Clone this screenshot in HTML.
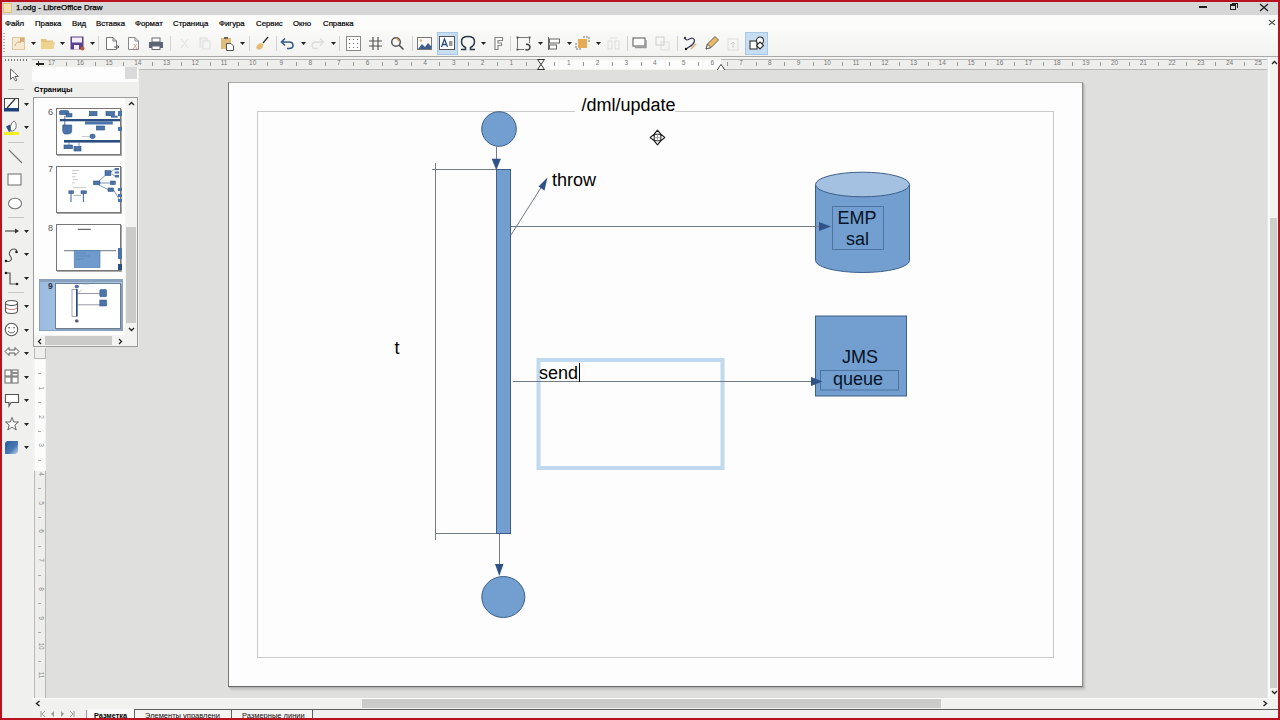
<!DOCTYPE html><html><head><meta charset="utf-8"><style>
*{margin:0;padding:0;box-sizing:border-box}
html,body{width:1280px;height:720px;overflow:hidden;background:#f0f0ef;font-family:"Liberation Sans",sans-serif;color:#000}
.a{position:absolute}
.t{position:absolute;white-space:nowrap;line-height:1}
</style></head><body>
<div class="a" style="left:0;top:0;width:1280px;height:15px;background:#d7d7d7"></div>
<div class="a" style="left:3px;top:3px;width:9px;height:10px;background:#f6e2b0;border:1px solid #e0c080"></div>
<div class="t" style="left:16px;top:4px;font-size:8px;color:#000;-webkit-text-stroke:0.25px #000">1.odg - LibreOffice Draw</div>
<div class="a" style="left:1199px;top:6px;width:8px;height:2px;background:#222"></div>
<div class="a" style="left:1230px;top:4px;width:6px;height:6px;border:1.5px solid #222;border-top-width:2px"></div>
<div class="a" style="left:1232px;top:3px;width:6px;height:5px;border-top:1.5px solid #222;border-right:1.5px solid #222"></div>
<svg class="a" style="left:1259px;top:3px" width="10" height="9"><path d="M1 1L9 8M9 1L1 8" stroke="#222" stroke-width="1.4"/></svg>
<div class="a" style="left:0;top:15px;width:1280px;height:15px;background:#fcfcfb"></div>
<div class="t" style="left:5px;top:20px;font-size:7.8px;color:#000;-webkit-text-stroke:0.2px #000">Файл</div>
<div class="t" style="left:35px;top:20px;font-size:7.8px;color:#000;-webkit-text-stroke:0.2px #000">Правка</div>
<div class="t" style="left:72px;top:20px;font-size:7.8px;color:#000;-webkit-text-stroke:0.2px #000">Вид</div>
<div class="t" style="left:96px;top:20px;font-size:7.8px;color:#000;-webkit-text-stroke:0.2px #000">Вставка</div>
<div class="t" style="left:135px;top:20px;font-size:7.8px;color:#000;-webkit-text-stroke:0.2px #000">Формат</div>
<div class="t" style="left:173px;top:20px;font-size:7.8px;color:#000;-webkit-text-stroke:0.2px #000">Страница</div>
<div class="t" style="left:219px;top:20px;font-size:7.8px;color:#000;-webkit-text-stroke:0.2px #000">Фигура</div>
<div class="t" style="left:256px;top:20px;font-size:7.8px;color:#000;-webkit-text-stroke:0.2px #000">Сервис</div>
<div class="t" style="left:293px;top:20px;font-size:7.8px;color:#000;-webkit-text-stroke:0.2px #000">Окно</div>
<div class="t" style="left:323px;top:20px;font-size:7.8px;color:#000;-webkit-text-stroke:0.2px #000">Справка</div>
<svg class="a" style="left:1268px;top:19px" width="8" height="7"><path d="M1 1L7 6M7 1L1 6" stroke="#555" stroke-width="1.2"/></svg>
<div class="a" style="left:0;top:30px;width:1280px;height:26px;background:linear-gradient(#fafaf9,#f2f2f1)"></div>
<div class="a" style="left:0;top:56px;width:1280px;height:1px;background:#a9a9a9"></div>
<div class="a" style="left:3px;top:33px;width:2px;height:20px;background:repeating-linear-gradient(#e0a0a0 0 1px,transparent 1px 3px)"></div>
<svg class="a" style="left:11px;top:36px" width="15" height="15"><rect x="1.5" y="1.5" width="12" height="12" fill="#f7ead2" stroke="#e0c69a"/><path d="M4 10C5 6 8 5 10 7" stroke="#caa36c" fill="none"/><rect x="9" y="2" width="4" height="4" fill="#d9b07a"/></svg>
<svg class="a" style="left:31px;top:42px" width="5" height="3"><path d="M0 0H5L2.5 3Z" fill="#222"/></svg>
<svg class="a" style="left:40px;top:37px" width="16" height="13"><path d="M1 2H6L7 3.5H13V12H1Z" fill="#e4c47e"/><path d="M1 5H15L13.5 12H1Z" fill="#eed38f"/></svg>
<svg class="a" style="left:60px;top:42px" width="5" height="3"><path d="M0 0H5L2.5 3Z" fill="#222"/></svg>
<svg class="a" style="left:70px;top:36px" width="15" height="15"><rect x="0.5" y="0.5" width="13" height="13" fill="#5b3f8c"/><rect x="2" y="1.5" width="10" height="5" fill="#f3eef8"/><rect x="4" y="9" width="5" height="4.5" fill="#f3eef8"/><circle cx="12.5" cy="12.5" r="2" fill="#c05a2a"/></svg>
<svg class="a" style="left:90px;top:42px" width="5" height="3"><path d="M0 0H5L2.5 3Z" fill="#222"/></svg>
<div class="a" style="left:98px;top:36px;width:1px;height:15px;background:#d2d2d2"></div>
<svg class="a" style="left:105px;top:36px" width="15" height="15"><path d="M1.5 1.5H8L11.5 5V13.5H1.5Z" fill="#fff" stroke="#777"/><path d="M8 1.5V5H11.5" fill="none" stroke="#777"/><path d="M9 11H14M12.5 9.5L14 11L12.5 12.5" stroke="#555" fill="none"/></svg>
<svg class="a" style="left:127px;top:36px" width="15" height="15"><path d="M1.5 1.5H8L11.5 5V13.5H1.5Z" fill="#fff" stroke="#888"/><path d="M8 1.5V5H11.5" fill="none" stroke="#888"/><path d="M7 8L10 13M10 8L6 13" stroke="#d99" fill="none"/></svg>
<svg class="a" style="left:148px;top:37px" width="16" height="13"><rect x="4" y="1" width="8" height="4" fill="#fff" stroke="#667"/><rect x="1" y="5" width="14" height="6" fill="#5c6673"/><rect x="4" y="9" width="8" height="3.5" fill="#fff" stroke="#667"/></svg>
<div class="a" style="left:170px;top:36px;width:1px;height:15px;background:#d2d2d2"></div>
<svg class="a" style="left:178px;top:37px" width="14" height="13"><path d="M3 2L10 11M10 2L3 11" stroke="#ddd" fill="none"/></svg>
<svg class="a" style="left:198px;top:36px" width="14" height="14"><rect x="2" y="2" width="7" height="9" fill="#eee" stroke="#ddd"/><rect x="5" y="5" width="7" height="8" fill="#f4f4f4" stroke="#ddd"/></svg>
<svg class="a" style="left:220px;top:36px" width="15" height="15"><rect x="1" y="2" width="10" height="11" fill="#e0bd7c"/><rect x="4" y="1" width="4" height="2" fill="#666"/><path d="M6.5 7.5H11L13.5 10V14.5H6.5Z" fill="#fff" stroke="#555"/></svg>
<svg class="a" style="left:240px;top:42px" width="5" height="3"><path d="M0 0H5L2.5 3Z" fill="#222"/></svg>
<div class="a" style="left:249px;top:36px;width:1px;height:15px;background:#d2d2d2"></div>
<svg class="a" style="left:255px;top:36px" width="14" height="15"><path d="M13 1L8 7" stroke="#333" stroke-width="1.3"/><path d="M1 12C2 8 5 6 8 8C9 10 7 13 4 14Z" fill="#e5bd72"/></svg>
<div class="a" style="left:276px;top:36px;width:1px;height:15px;background:#d2d2d2"></div>
<svg class="a" style="left:280px;top:37px" width="15" height="13"><path d="M2 5H9C12 5 13 7 13 8.5C13 10.5 11 11.5 9 11.5H7" fill="none" stroke="#365a86" stroke-width="1.6"/><path d="M5 1.5L1.5 5L5 8.5" fill="none" stroke="#365a86" stroke-width="1.6"/></svg>
<svg class="a" style="left:301px;top:42px" width="5" height="3"><path d="M0 0H5L2.5 3Z" fill="#222"/></svg>
<svg class="a" style="left:310px;top:37px" width="15" height="13"><path d="M13 5H6C3 5 2 7 2 8.5C2 10.5 4 11.5 6 11.5H8" fill="none" stroke="#dcdcdc" stroke-width="1.4"/><path d="M10 1.5L13.5 5L10 8.5" fill="none" stroke="#dcdcdc" stroke-width="1.4"/></svg>
<svg class="a" style="left:331px;top:42px" width="5" height="3"><path d="M0 0H5L2.5 3Z" fill="#222"/></svg>
<div class="a" style="left:339px;top:36px;width:1px;height:15px;background:#d2d2d2"></div>
<svg class="a" style="left:346px;top:36px" width="15" height="15"><rect x="0.5" y="0.5" width="14" height="14" fill="#fff" stroke="#888"/><g fill="#666"><rect x="3" y="3" width="1" height="1"/><rect x="3" y="7" width="1" height="1"/><rect x="3" y="11" width="1" height="1"/><rect x="7" y="3" width="1" height="1"/><rect x="7" y="7" width="1" height="1"/><rect x="7" y="11" width="1" height="1"/><rect x="11" y="3" width="1" height="1"/><rect x="11" y="7" width="1" height="1"/><rect x="11" y="11" width="1" height="1"/></g></svg>
<svg class="a" style="left:368px;top:36px" width="15" height="15"><path d="M5 1V14M10 1V14M1 5H14M1 10H14" stroke="#555" stroke-width="1.2"/></svg>
<svg class="a" style="left:390px;top:36px" width="15" height="15"><circle cx="6" cy="6" r="4.3" fill="none" stroke="#555" stroke-width="1.5"/><path d="M9 9L13.5 13.5" stroke="#555" stroke-width="1.7"/><path d="M6 2L9 5" stroke="#d9a650" stroke-width="1.2"/></svg>
<div class="a" style="left:412px;top:36px;width:1px;height:15px;background:#d2d2d2"></div>
<svg class="a" style="left:417px;top:36px" width="15" height="15"><rect x="0.5" y="1.5" width="14" height="12" fill="#fff" stroke="#777"/><path d="M1 13L5 8L8 11L11 7L14 10V13Z" fill="#3e5f8e"/><circle cx="4" cy="4.5" r="1.2" fill="#d8b070"/></svg>
<div class="a" style="left:437px;top:32px;width:21px;height:23px;background:#c6ddf2;border:1px solid #a9c8e6"></div>
<svg class="a" style="left:439px;top:36px" width="16" height="15"><rect x="0.5" y="0.5" width="15" height="13" fill="#fff" stroke="#555"/><path d="M2.5 11L5.5 3L8.5 11M3.5 8.5H7.5" fill="none" stroke="#2c4f7c" stroke-width="1.3"/><rect x="10" y="5" width="3.5" height="5" fill="#999"/></svg>
<svg class="a" style="left:460px;top:35px" width="16" height="16"><path d="M1 14.5H5.5V12.5C2.8 11.2 1.5 9 1.5 6.5C1.5 3.3 4 1.5 8 1.5C12 1.5 14.5 3.3 14.5 6.5C14.5 9 13.2 11.2 10.5 12.5V14.5H15" fill="none" stroke="#2d3a48" stroke-width="1.5"/></svg>
<svg class="a" style="left:481px;top:42px" width="5" height="3"><path d="M0 0H5L2.5 3Z" fill="#222"/></svg>
<svg class="a" style="left:493px;top:36px" width="11" height="15"><path d="M2 1.5H9.5V4.5H5V7H8.5V9.5H5V13.5H2Z" fill="#fff" stroke="#888" stroke-width="1.2"/></svg>
<div class="a" style="left:510px;top:36px;width:1px;height:15px;background:#d2d2d2"></div>
<svg class="a" style="left:516px;top:36px" width="16" height="15"><path d="M1.5 2V12M2 1.5H12M13.5 2V7M2 13.5H8" fill="none" stroke="#777" stroke-width="1"/><rect x="0.5" y="0.5" width="2" height="2" fill="#555"/><rect x="12.5" y="0.5" width="2" height="2" fill="#555"/><rect x="0.5" y="12.5" width="2" height="2" fill="#555"/><path d="M10 8.5C12 8 14 9 14 11C14 13.5 11.5 14.5 9.5 13.5" fill="none" stroke="#3a3a3a" stroke-width="1.5"/></svg>
<svg class="a" style="left:538px;top:42px" width="5" height="3"><path d="M0 0H5L2.5 3Z" fill="#222"/></svg>
<svg class="a" style="left:547px;top:36px" width="15" height="15"><path d="M1.5 1V14" stroke="#666"/><rect x="2.5" y="3" width="10" height="4" fill="#fff" stroke="#666"/><rect x="2.5" y="9" width="7" height="4" fill="#fff" stroke="#666"/></svg>
<svg class="a" style="left:567px;top:42px" width="5" height="3"><path d="M0 0H5L2.5 3Z" fill="#222"/></svg>
<svg class="a" style="left:575px;top:36px" width="15" height="15"><path d="M1 7V13H7" fill="none" stroke="#777" stroke-dasharray="2 1"/><path d="M8 1H14V7" fill="none" stroke="#777" stroke-dasharray="2 1"/><rect x="3" y="3" width="9" height="9" fill="#e7ab56"/></svg>
<svg class="a" style="left:596px;top:42px" width="5" height="3"><path d="M0 0H5L2.5 3Z" fill="#222"/></svg>
<svg class="a" style="left:606px;top:37px" width="15" height="13"><rect x="2" y="4" width="4" height="8" fill="none" stroke="#ddd"/><rect x="9" y="4" width="4" height="8" fill="none" stroke="#ddd"/><path d="M4 1H11" stroke="#ddd"/></svg>
<div class="a" style="left:627px;top:36px;width:1px;height:15px;background:#d2d2d2"></div>
<svg class="a" style="left:632px;top:37px" width="15" height="12"><rect x="1" y="1" width="12" height="8" fill="#fff" stroke="#555"/><path d="M3 10.5H14V3" fill="none" stroke="#999" stroke-width="1.5"/></svg>
<svg class="a" style="left:655px;top:36px" width="15" height="15"><rect x="1" y="1" width="8" height="8" fill="none" stroke="#ccc"/><rect x="6" y="6" width="8" height="8" fill="none" stroke="#ddd"/></svg>
<div class="a" style="left:677px;top:36px;width:1px;height:15px;background:#d2d2d2"></div>
<svg class="a" style="left:683px;top:36px" width="15" height="15"><path d="M2 2C4 6 5 3 9 2C13 3 12 8 6 11L3 13" fill="none" stroke="#335" stroke-width="1.2"/><circle cx="2" cy="2" r="1.2" fill="#333"/><circle cx="3" cy="13" r="1.2" fill="#111"/><path d="M8 13L13 8" stroke="#e0b070" stroke-width="1.5"/></svg>
<svg class="a" style="left:704px;top:35px" width="16" height="16"><path d="M2 14L3.5 9L11 1.5L14.5 5L7 12.5Z" fill="#e9b967" stroke="#555" stroke-width=".9"/><path d="M2 14L3.5 9L7 12.5Z" fill="#f3ebcf" stroke="#555" stroke-width=".9"/></svg>
<svg class="a" style="left:727px;top:36px" width="15" height="15"><rect x="1" y="3" width="10" height="11" fill="none" stroke="#ddd"/><path d="M6 12V6M4 8L6 6L8 8" stroke="#ccc" fill="none"/></svg>
<div class="a" style="left:745px;top:32px;width:23px;height:23px;background:#c6ddf2;border:1px solid #a9c8e6"></div>
<svg class="a" style="left:749px;top:36px" width="16" height="15"><rect x="1" y="5" width="7" height="8" fill="#fff" stroke="#333" stroke-width="1.1"/><circle cx="11" cy="4.5" r="3.5" fill="#fff" stroke="#333" stroke-width="1.1"/><path d="M11 6L14.5 9.5L11 13L7.5 9.5Z" fill="#fff" stroke="#333" stroke-width="1.1"/></svg>
<div class="a" style="left:30px;top:57px;width:1240px;height:13px;background:#f3f3f2"></div>
<div class="a" style="left:30px;top:59px;width:510px;height:11px;border-top:1px solid #b8b8b8;border-bottom:1px solid #b8b8b8;background:#eeeeed"></div>
<div class="a" style="left:721px;top:59px;width:548px;height:11px;border-top:1px solid #b8b8b8;border-bottom:1px solid #b8b8b8;background:#eeeeed"></div>
<div class="a" style="left:540px;top:60px;width:181px;height:9px;background:#fcfcfc"></div>
<div class="t" style="left:562.7px;top:60px;width:12px;text-align:center;font-size:6.5px;color:#777">1</div>
<div class="a" style="left:554.4px;top:62px;width:1px;height:3.5px;background:#999"></div>
<div class="t" style="left:591.5px;top:60px;width:12px;text-align:center;font-size:6.5px;color:#777">2</div>
<div class="a" style="left:583.1px;top:62px;width:1px;height:3.5px;background:#999"></div>
<div class="t" style="left:620.2px;top:60px;width:12px;text-align:center;font-size:6.5px;color:#777">3</div>
<div class="a" style="left:611.8px;top:62px;width:1px;height:3.5px;background:#999"></div>
<div class="t" style="left:648.9px;top:60px;width:12px;text-align:center;font-size:6.5px;color:#777">4</div>
<div class="a" style="left:640.6px;top:62px;width:1px;height:3.5px;background:#999"></div>
<div class="t" style="left:677.6px;top:60px;width:12px;text-align:center;font-size:6.5px;color:#777">5</div>
<div class="a" style="left:669.3px;top:62px;width:1px;height:3.5px;background:#999"></div>
<div class="t" style="left:706.4px;top:60px;width:12px;text-align:center;font-size:6.5px;color:#777">6</div>
<div class="a" style="left:698.0px;top:62px;width:1px;height:3.5px;background:#999"></div>
<div class="t" style="left:735.1px;top:60px;width:12px;text-align:center;font-size:6.5px;color:#777">7</div>
<div class="a" style="left:726.7px;top:62px;width:1px;height:3.5px;background:#999"></div>
<div class="t" style="left:763.8px;top:60px;width:12px;text-align:center;font-size:6.5px;color:#777">8</div>
<div class="a" style="left:755.5px;top:62px;width:1px;height:3.5px;background:#999"></div>
<div class="t" style="left:792.6px;top:60px;width:12px;text-align:center;font-size:6.5px;color:#777">9</div>
<div class="a" style="left:784.2px;top:62px;width:1px;height:3.5px;background:#999"></div>
<div class="t" style="left:821.3px;top:60px;width:12px;text-align:center;font-size:6.5px;color:#777">10</div>
<div class="a" style="left:812.9px;top:62px;width:1px;height:3.5px;background:#999"></div>
<div class="t" style="left:850.0px;top:60px;width:12px;text-align:center;font-size:6.5px;color:#777">11</div>
<div class="a" style="left:841.7px;top:62px;width:1px;height:3.5px;background:#999"></div>
<div class="t" style="left:878.8px;top:60px;width:12px;text-align:center;font-size:6.5px;color:#777">12</div>
<div class="a" style="left:870.4px;top:62px;width:1px;height:3.5px;background:#999"></div>
<div class="t" style="left:907.5px;top:60px;width:12px;text-align:center;font-size:6.5px;color:#777">13</div>
<div class="a" style="left:899.1px;top:62px;width:1px;height:3.5px;background:#999"></div>
<div class="t" style="left:936.2px;top:60px;width:12px;text-align:center;font-size:6.5px;color:#777">14</div>
<div class="a" style="left:927.9px;top:62px;width:1px;height:3.5px;background:#999"></div>
<div class="t" style="left:965.0px;top:60px;width:12px;text-align:center;font-size:6.5px;color:#777">15</div>
<div class="a" style="left:956.6px;top:62px;width:1px;height:3.5px;background:#999"></div>
<div class="t" style="left:993.7px;top:60px;width:12px;text-align:center;font-size:6.5px;color:#777">16</div>
<div class="a" style="left:985.3px;top:62px;width:1px;height:3.5px;background:#999"></div>
<div class="t" style="left:1022.4px;top:60px;width:12px;text-align:center;font-size:6.5px;color:#777">17</div>
<div class="a" style="left:1014.0px;top:62px;width:1px;height:3.5px;background:#999"></div>
<div class="t" style="left:1051.1px;top:60px;width:12px;text-align:center;font-size:6.5px;color:#777">18</div>
<div class="a" style="left:1042.8px;top:62px;width:1px;height:3.5px;background:#999"></div>
<div class="t" style="left:1079.9px;top:60px;width:12px;text-align:center;font-size:6.5px;color:#777">19</div>
<div class="a" style="left:1071.5px;top:62px;width:1px;height:3.5px;background:#999"></div>
<div class="t" style="left:1108.6px;top:60px;width:12px;text-align:center;font-size:6.5px;color:#777">20</div>
<div class="a" style="left:1100.2px;top:62px;width:1px;height:3.5px;background:#999"></div>
<div class="t" style="left:1137.3px;top:60px;width:12px;text-align:center;font-size:6.5px;color:#777">21</div>
<div class="a" style="left:1129.0px;top:62px;width:1px;height:3.5px;background:#999"></div>
<div class="t" style="left:1166.1px;top:60px;width:12px;text-align:center;font-size:6.5px;color:#777">22</div>
<div class="a" style="left:1157.7px;top:62px;width:1px;height:3.5px;background:#999"></div>
<div class="t" style="left:1194.8px;top:60px;width:12px;text-align:center;font-size:6.5px;color:#777">23</div>
<div class="a" style="left:1186.4px;top:62px;width:1px;height:3.5px;background:#999"></div>
<div class="t" style="left:1223.5px;top:60px;width:12px;text-align:center;font-size:6.5px;color:#777">24</div>
<div class="a" style="left:1215.2px;top:62px;width:1px;height:3.5px;background:#999"></div>
<div class="t" style="left:1252.2px;top:60px;width:12px;text-align:center;font-size:6.5px;color:#777">25</div>
<div class="a" style="left:1243.9px;top:62px;width:1px;height:3.5px;background:#999"></div>
<div class="t" style="left:505.3px;top:60px;width:12px;text-align:center;font-size:6.5px;color:#777">1</div>
<div class="a" style="left:525.6px;top:62px;width:1px;height:3.5px;background:#999"></div>
<div class="t" style="left:476.5px;top:60px;width:12px;text-align:center;font-size:6.5px;color:#777">2</div>
<div class="a" style="left:496.9px;top:62px;width:1px;height:3.5px;background:#999"></div>
<div class="t" style="left:447.8px;top:60px;width:12px;text-align:center;font-size:6.5px;color:#777">3</div>
<div class="a" style="left:468.2px;top:62px;width:1px;height:3.5px;background:#999"></div>
<div class="t" style="left:419.1px;top:60px;width:12px;text-align:center;font-size:6.5px;color:#777">4</div>
<div class="a" style="left:439.4px;top:62px;width:1px;height:3.5px;background:#999"></div>
<div class="t" style="left:390.4px;top:60px;width:12px;text-align:center;font-size:6.5px;color:#777">5</div>
<div class="a" style="left:410.7px;top:62px;width:1px;height:3.5px;background:#999"></div>
<div class="t" style="left:361.6px;top:60px;width:12px;text-align:center;font-size:6.5px;color:#777">6</div>
<div class="a" style="left:382.0px;top:62px;width:1px;height:3.5px;background:#999"></div>
<div class="t" style="left:332.9px;top:60px;width:12px;text-align:center;font-size:6.5px;color:#777">7</div>
<div class="a" style="left:353.3px;top:62px;width:1px;height:3.5px;background:#999"></div>
<div class="t" style="left:304.2px;top:60px;width:12px;text-align:center;font-size:6.5px;color:#777">8</div>
<div class="a" style="left:324.5px;top:62px;width:1px;height:3.5px;background:#999"></div>
<div class="t" style="left:275.4px;top:60px;width:12px;text-align:center;font-size:6.5px;color:#777">9</div>
<div class="a" style="left:295.8px;top:62px;width:1px;height:3.5px;background:#999"></div>
<div class="t" style="left:246.7px;top:60px;width:12px;text-align:center;font-size:6.5px;color:#777">10</div>
<div class="a" style="left:267.1px;top:62px;width:1px;height:3.5px;background:#999"></div>
<div class="t" style="left:218.0px;top:60px;width:12px;text-align:center;font-size:6.5px;color:#777">11</div>
<div class="a" style="left:238.3px;top:62px;width:1px;height:3.5px;background:#999"></div>
<div class="t" style="left:189.2px;top:60px;width:12px;text-align:center;font-size:6.5px;color:#777">12</div>
<div class="a" style="left:209.6px;top:62px;width:1px;height:3.5px;background:#999"></div>
<div class="t" style="left:160.5px;top:60px;width:12px;text-align:center;font-size:6.5px;color:#777">13</div>
<div class="a" style="left:180.9px;top:62px;width:1px;height:3.5px;background:#999"></div>
<div class="t" style="left:131.8px;top:60px;width:12px;text-align:center;font-size:6.5px;color:#777">14</div>
<div class="a" style="left:152.1px;top:62px;width:1px;height:3.5px;background:#999"></div>
<div class="t" style="left:103.1px;top:60px;width:12px;text-align:center;font-size:6.5px;color:#777">15</div>
<div class="a" style="left:123.4px;top:62px;width:1px;height:3.5px;background:#999"></div>
<div class="t" style="left:74.3px;top:60px;width:12px;text-align:center;font-size:6.5px;color:#777">16</div>
<div class="a" style="left:94.7px;top:62px;width:1px;height:3.5px;background:#999"></div>
<div class="t" style="left:45.6px;top:60px;width:12px;text-align:center;font-size:6.5px;color:#777">17</div>
<div class="a" style="left:66.0px;top:62px;width:1px;height:3.5px;background:#999"></div>
<div class="a" style="left:36px;top:63px;width:8px;height:1.5px;background:#222"></div><div class="a" style="left:37.5px;top:61px;width:1.5px;height:5px;background:#222"></div>
<svg class="a" style="left:536px;top:58px" width="10" height="13"><path d="M1.5 1.5H8.5L5 6.5L8.5 11.5H1.5L5 6.5Z" fill="#fff" stroke="#333" stroke-width="1"/></svg>
<svg class="a" style="left:716px;top:63px" width="10" height="8"><path d="M1 7.5H9L6.5 3.5L5 1.5L3.5 3.5Z" fill="#fff" stroke="#333" stroke-width="1"/></svg>
<div class="a" style="left:46px;top:70px;width:1221px;height:628px;background:#dfdfde"></div>
<div class="a" style="left:229px;top:84px;width:856px;height:607px;background:linear-gradient(#dfdfde,#dfdfde) ;"></div>
<div class="a" style="left:228px;top:82px;width:855px;height:605px;background:#fcfdfc;border-left:1px solid #777;border-top:1px solid #aaa;border-right:1px solid #8f8f8f;border-bottom:1px solid #666a66;box-shadow:1px 1px 0 #b4b4b4,2px 3px 2px rgba(0,0,0,.12)"></div>
<div class="a" style="left:257px;top:111px;width:797px;height:547px;border:1px solid #c9cbc9"></div>
<svg class="a" style="left:0;top:0" width="1280" height="720" viewBox="0 0 1280 720">
<defs></defs>
<circle cx="499" cy="129" r="17.3" fill="#729fcf" stroke="#3d5f8a" stroke-width="1"/>
<rect x="496.5" y="169.5" width="14" height="364" fill="#729fcf" stroke="#3d5f8a" stroke-width="1"/>
<ellipse cx="503.3" cy="597" rx="21.5" ry="20.5" fill="#729fcf" stroke="#3d5f8a" stroke-width="1"/>
<path d="M815.5 184.5V260.5A47 12 0 0 0 909.5 260.5V184.5" fill="#729fcf" stroke="#3d5f8a" stroke-width="1"/>
<ellipse cx="862.5" cy="184.5" rx="47" ry="12.3" fill="#a5c1e2" stroke="#3d5f8a" stroke-width="1"/>
<rect x="832.5" y="206.5" width="51" height="43" fill="none" stroke="#4f74a3" stroke-width="1"/>
<rect x="815.5" y="316" width="91" height="80" fill="#729fcf" stroke="#3d5f8a" stroke-width="1"/>
<rect x="820.5" y="370.5" width="78" height="19.5" fill="none" stroke="#4f74a3" stroke-width="1"/>
<rect x="538.5" y="360" width="184" height="108" fill="none" stroke="#bfd9ef" stroke-width="4"/>
<path d="M435.5 163V540M432 169.5H496M435.5 533.5H496" fill="none" stroke="#737b84" stroke-width="1"/>
<path d="M496.5 146.5V160" stroke="#737b84" stroke-width="1"/>
<path d="M492 159L500.5 159L496.3 169.5Z" fill="#2f5386" stroke="#2f5386" stroke-width="0.5"/>
<path d="M511 235L542 186" stroke="#737b84" stroke-width="1"/>
<path d="M547.5 177.5L538.5 186.5L544.5 190.5Z" fill="#2f5386"/>
<path d="M511 226.5H821" stroke="#737b84" stroke-width="1"/>
<path d="M819 222L831 226.5L819 231Z" fill="#2f5386"/>
<path d="M513 381.5H812" stroke="#737b84" stroke-width="1"/>
<path d="M811 377L822.5 381.5L811 386Z" fill="#2f5386"/>
<path d="M499.5 534V565" stroke="#737b84" stroke-width="1"/>
<path d="M495 564L503.5 564L499.3 576Z" fill="#2f5386"/>
<rect x="575" y="95" width="100" height="22" fill="#fcfdfc"/>
</svg>
<div class="t" style="left:581.5px;top:96px;font-size:18px;color:#000">/dml/update</div>
<div class="t" style="left:552px;top:171px;font-size:18px;color:#000">throw</div>
<div class="t" style="left:394.5px;top:338.5px;font-size:18px;color:#000">t</div>
<div class="t" style="left:539px;top:364px;font-size:18px;color:#000">send</div>
<div class="a" style="left:579px;top:363px;width:1px;height:19px;background:#000"></div>
<div class="t" style="left:837.5px;top:209px;font-size:18px;color:#071225">EMP</div>
<div class="t" style="left:846px;top:229.5px;font-size:18px;color:#071225">sal</div>
<div class="t" style="left:842px;top:347.5px;font-size:18px;color:#071225">JMS</div>
<div class="t" style="left:833px;top:370px;font-size:18px;color:#071225">queue</div>
<svg class="a" style="left:649px;top:129px" width="17" height="17"><path d="M8.5 1.2L11.8 5.2H5.2Z M15.8 8.5L11.8 11.8V5.2Z M8.5 15.8L5.2 11.8H11.8Z M1.2 8.5L5.2 5.2V11.8Z" fill="#fff" stroke="#1a1a1a" stroke-width="1.1" stroke-linejoin="round"/><path d="M8.5 5V12M5 8.5H12" stroke="#999" stroke-width=".8"/></svg>
<div class="a" style="left:1267px;top:57px;width:11px;height:650px;background:linear-gradient(90deg,#e6e6e5 0 1px,#fbfbfb 1px 3px,#f2f2f1 3px)"></div>
<div class="a" style="left:1270px;top:218px;width:7px;height:470px;background:#cdcdcc"></div>
<svg class="a" style="left:1271px;top:60px" width="7" height="5"><path d="M1 4L3.5 1.5L6 4" fill="none" stroke="#222" stroke-width="1.3"/></svg>
<svg class="a" style="left:1271px;top:690px" width="7" height="5"><path d="M1 1L3.5 3.5L6 1" fill="none" stroke="#222" stroke-width="1.3"/></svg>
<div class="a" style="left:0;top:57px;width:32px;height:655px;background:#f0f0ef"></div>
<div class="a" style="left:5px;top:59px;width:22px;height:2px;background:repeating-linear-gradient(90deg,#777 0 1.5px,transparent 1.5px 3px)"></div>
<svg class="a" style="left:9px;top:68px" width="12" height="14"><path d="M1.5 1L1.5 11.5L4 9L6.5 13L8 12L5.8 8.5H9.5Z" fill="#fff" stroke="#666" stroke-width="1"/></svg>
<div class="a" style="left:8px;top:89px;width:16px;height:1px;background:#c8c8c8"></div>
<svg class="a" style="left:4px;top:98px" width="16" height="15"><rect x="0.5" y="0.5" width="14" height="10" fill="#fff" stroke="#444"/><path d="M3 10L11 1" stroke="#333" stroke-width="1.2"/><rect x="0" y="10" width="15" height="3.5" fill="#1f3f7a"/></svg>
<svg class="a" style="left:24px;top:103px" width="5" height="3"><path d="M0 0H5L2.5 3Z" fill="#222"/></svg>
<svg class="a" style="left:4px;top:119px" width="16" height="17"><path d="M2 7.5L6 5.5L9 11L5 13Z" fill="#2f4f7f"/><path d="M6.5 10C6 6 8 3 10 2C12 3 12.5 6 12 8.5C11.5 11 9 12.5 7 12Z" fill="#fff" stroke="#666" stroke-width=".9"/><rect x="0" y="13" width="15" height="3" fill="#f3ee1e"/></svg>
<svg class="a" style="left:24px;top:126px" width="5" height="3"><path d="M0 0H5L2.5 3Z" fill="#222"/></svg>
<div class="a" style="left:8px;top:142px;width:16px;height:1px;background:#c8c8c8"></div>
<svg class="a" style="left:8px;top:149px" width="15" height="15"><path d="M1 1L14 14" stroke="#777" stroke-width="1.1"/></svg>
<svg class="a" style="left:7px;top:173px" width="16" height="13"><rect x="1" y="1" width="13" height="11" fill="#fff" stroke="#777" stroke-width="1.1"/></svg>
<svg class="a" style="left:7px;top:197px" width="16" height="13"><ellipse cx="8" cy="6.5" rx="6.5" ry="5.3" fill="#fff" stroke="#777" stroke-width="1.1"/></svg>
<div class="a" style="left:8px;top:217px;width:16px;height:1px;background:#c8c8c8"></div>
<svg class="a" style="left:4px;top:227px" width="16" height="8"><path d="M1 4H13" stroke="#444" stroke-width="1.1"/><path d="M11 1.5L15 4L11 6.5Z" fill="#333"/></svg>
<svg class="a" style="left:24px;top:230px" width="5" height="3"><path d="M0 0H5L2.5 3Z" fill="#222"/></svg>
<svg class="a" style="left:4px;top:247px" width="15" height="17"><path d="M2 14C6 15.5 9 12.5 6.5 9.5C4 6.5 6 2 10 2C12 2 13 3.5 12.5 5" fill="none" stroke="#555" stroke-width="1.1"/><circle cx="2" cy="14" r="1.3" fill="#222"/><circle cx="12.5" cy="5" r="1.3" fill="#222"/></svg>
<svg class="a" style="left:24px;top:253px" width="5" height="3"><path d="M0 0H5L2.5 3Z" fill="#222"/></svg>
<svg class="a" style="left:4px;top:271px" width="15" height="16"><path d="M2 2H6V13H13" fill="none" stroke="#555" stroke-width="1.2"/><circle cx="2" cy="2" r="1.3" fill="#222"/><circle cx="13" cy="13" r="1.3" fill="#222"/></svg>
<svg class="a" style="left:24px;top:277px" width="5" height="3"><path d="M0 0H5L2.5 3Z" fill="#222"/></svg>
<div class="a" style="left:8px;top:292px;width:16px;height:1px;background:#c8c8c8"></div>
<svg class="a" style="left:4px;top:299px" width="15" height="16"><path d="M1.5 4V12A6 2.5 0 0 0 13.5 12V4" fill="#fff" stroke="#555" stroke-width="1.1"/><ellipse cx="7.5" cy="4" rx="6" ry="2.5" fill="#fff" stroke="#555" stroke-width="1.1"/><path d="M1.5 8A6 2.5 0 0 0 13.5 8" fill="none" stroke="#b55" stroke-width=".8"/></svg>
<svg class="a" style="left:24px;top:305px" width="5" height="3"><path d="M0 0H5L2.5 3Z" fill="#222"/></svg>
<svg class="a" style="left:4px;top:322px" width="15" height="15"><circle cx="7.5" cy="7.5" r="6.2" fill="#fff" stroke="#555" stroke-width="1.1"/><circle cx="5" cy="5.8" r=".8" fill="#444"/><circle cx="10" cy="5.8" r=".8" fill="#444"/><path d="M4 9C6 11.5 9 11.5 11 9" fill="none" stroke="#555"/></svg>
<svg class="a" style="left:24px;top:329px" width="5" height="3"><path d="M0 0H5L2.5 3Z" fill="#222"/></svg>
<svg class="a" style="left:4px;top:346px" width="16" height="11"><path d="M1 5.5L5 1.5V4H11V1.5L15 5.5L11 9.5V7H5V9.5Z" fill="#fff" stroke="#555" stroke-width="1"/></svg>
<svg class="a" style="left:24px;top:352px" width="5" height="3"><path d="M0 0H5L2.5 3Z" fill="#222"/></svg>
<svg class="a" style="left:4px;top:369px" width="16" height="16"><rect x="1" y="1" width="6" height="6" fill="#fff" stroke="#666"/><rect x="8" y="1" width="6" height="6" fill="#fff" stroke="#666"/><rect x="1" y="8" width="6" height="6" fill="#fff" stroke="#666"/><rect x="8" y="8" width="6" height="6" fill="#fff" stroke="#666"/><rect x="8" y="3" width="6" height="2" fill="#888"/></svg>
<svg class="a" style="left:24px;top:376px" width="5" height="3"><path d="M0 0H5L2.5 3Z" fill="#222"/></svg>
<svg class="a" style="left:4px;top:393px" width="16" height="15"><path d="M1.5 1.5H14.5V9.5H7L5 13V9.5H1.5Z" fill="#fff" stroke="#555" stroke-width="1.1"/></svg>
<svg class="a" style="left:24px;top:399px" width="5" height="3"><path d="M0 0H5L2.5 3Z" fill="#222"/></svg>
<svg class="a" style="left:4px;top:416px" width="16" height="16"><path d="M8 1.5L9.8 6H14.5L10.8 9L12.2 14L8 11L3.8 14L5.2 9L1.5 6H6.2Z" fill="#fff" stroke="#666" stroke-width="1"/></svg>
<svg class="a" style="left:24px;top:423px" width="5" height="3"><path d="M0 0H5L2.5 3Z" fill="#222"/></svg>
<svg class="a" style="left:4px;top:439px" width="16" height="16"><defs><linearGradient id="g3" x1="0" y1="0" x2="1" y2="1"><stop offset="0" stop-color="#2a5a9a"/><stop offset=".6" stop-color="#4a7ab5"/><stop offset="1" stop-color="#c8d8ec"/></linearGradient></defs><path d="M3 2H14V13L12 15H1V4Z" fill="url(#g3)"/></svg>
<svg class="a" style="left:24px;top:446px" width="5" height="3"><path d="M0 0H5L2.5 3Z" fill="#222"/></svg>
<div class="a" style="left:32px;top:66px;width:107px;height:281px;background:#efefee"></div>
<div class="a" style="left:32px;top:67px;width:106px;height:15px;background:#fdfdfd"></div>
<div class="a" style="left:125px;top:67px;width:12px;height:12px;background:#dadada"></div>
<div class="t" style="left:34px;top:86px;font-size:7.6px;font-weight:bold;color:#000">Страницы</div>
<div class="a" style="left:33px;top:97px;width:105px;height:250px;background:#fdfdfd;border:1px solid #9c9c9c"></div>
<div class="a" style="left:125px;top:98px;width:12px;height:237px;background:#f3f3f2"></div>
<div class="a" style="left:126px;top:227px;width:10px;height:96px;background:#cbcbca"></div>
<svg class="a" style="left:128px;top:101px" width="7" height="5"><path d="M1 4L3.5 1.5L6 4" fill="none" stroke="#222" stroke-width="1.3"/></svg>
<svg class="a" style="left:128px;top:327px" width="7" height="5"><path d="M1 1L3.5 3.5L6 1" fill="none" stroke="#222" stroke-width="1.3"/></svg>
<div class="a" style="left:34px;top:335px;width:103px;height:11px;background:#f3f3f2"></div>
<div class="a" style="left:45px;top:336px;width:67px;height:9px;background:#cbcbca"></div>
<svg class="a" style="left:37px;top:338px" width="5" height="7"><path d="M4 1L1.5 3.5L4 6" fill="none" stroke="#222" stroke-width="1.3"/></svg>
<svg class="a" style="left:118px;top:338px" width="5" height="7"><path d="M1 1L3.5 3.5L1 6" fill="none" stroke="#222" stroke-width="1.3"/></svg>
<div class="a" style="left:39px;top:279px;width:84px;height:52px;background:linear-gradient(90deg,#9bbce0,#aecbea);border:1.5px solid #8aa2bd;border-top-width:3px"></div>
<div class="t" style="left:48px;top:108px;font-size:9px;color:#555">6</div>
<div class="t" style="left:48px;top:165px;font-size:9px;color:#555">7</div>
<div class="t" style="left:48px;top:224px;font-size:9px;color:#555">8</div>
<div class="t" style="left:48px;top:282px;font-size:8.5px;font-weight:bold;color:#2a3340">9</div>
<div class="a" style="left:56px;top:108px;width:65px;height:47px;background:#fff;border:1px solid #777;box-shadow:1px 1px 0 #aaa"></div>
<div class="a" style="left:56px;top:166px;width:65px;height:47px;background:#fff;border:1px solid #777;box-shadow:1px 1px 0 #aaa"></div>
<div class="a" style="left:56px;top:224px;width:65px;height:47px;background:#fff;border:1px solid #777;box-shadow:1px 1px 0 #aaa"></div>
<div class="a" style="left:55px;top:283px;width:66px;height:46px;background:#fff;border:1px solid #6d7f95;box-shadow:1px 1px 0 #8ca0b8"></div>
<svg class="a" style="left:56px;top:108px" width="66" height="47">
<path d="M3.5 3A2 2 0 0 1 5 2.5H11A2 2 0 0 1 13 4.5V6.5H3.5Z" fill="#4a74aa" stroke="#2a4f80" stroke-width=".6"/>
<rect x="10" y="5.5" width="6" height="3.5" fill="#4a74aa" stroke="#2a4f80" stroke-width=".5"/>
<rect x="33.5" y="3.5" width="7.5" height="4.2" fill="#4a74aa" stroke="#2a4f80" stroke-width=".6"/>
<rect x="50" y="3.5" width="8.5" height="4.2" fill="#4a74aa" stroke="#2a4f80" stroke-width=".6"/>
<rect x="62" y="3" width="4" height="5" fill="#4a74aa"/>
<rect x="55" y="7.7" width="6.6" height="2" fill="#4a74aa"/>
<path d="M8.8 8V17" stroke="#2a4f80" stroke-width=".8"/>
<rect x="3.8" y="11" width="60.2" height="2.3" fill="#2a4f80"/>
<rect x="29" y="13.3" width="27.8" height="3.2" fill="#4a74aa"/>
<path d="M6.7 17H15.7V23C15.7 25 14 26 12 26H9C7.5 26 6.7 24 6.7 22Z" fill="#4a74aa" stroke="#2a4f80" stroke-width=".6"/>
<rect x="40.3" y="18" width="8.3" height="4" fill="#4a74aa" stroke="#2a4f80" stroke-width=".6"/>
<rect x="62" y="19" width="4" height="4" fill="#4a74aa"/>
<ellipse cx="36.5" cy="28.3" rx="2.7" ry="2.3" fill="#4a74aa" stroke="#2a4f80" stroke-width=".5"/>
<path d="M25.8 28.5H33" stroke="#9ab" stroke-width=".6"/>
<rect x="8" y="32" width="56" height="2.6" fill="#2a4f80"/>
<path d="M13 34.6V37M23 34.6V38.5" stroke="#2a4f80" stroke-width=".6"/>
<rect x="8" y="37" width="8.4" height="3.7" fill="#4a74aa" stroke="#2a4f80" stroke-width=".6"/>
<rect x="18" y="38.5" width="7" height="4.5" fill="#4a74aa" stroke="#2a4f80" stroke-width=".6"/>
</svg>
<svg class="a" style="left:56px;top:166px" width="66" height="47">
<path d="M16 4.6H23M16 7.5H21M16 10.7H19.5M17 13.6H22M16 16.9H19M17 21.6H30" stroke="#aaa" stroke-width=".6"/>
<path d="M17.5 29.4H25" stroke="#9aa" stroke-width=".9"/>
<rect x="12.8" y="24.8" width="4.7" height="2.9" fill="#4a74aa" stroke="#2a4f80" stroke-width=".5"/>
<rect x="25" y="24.8" width="5.5" height="2.9" fill="#4a74aa" stroke="#2a4f80" stroke-width=".5"/>
<path d="M15 27.7V36M27.4 27.7V36" stroke="#2a4f80" stroke-width=".9"/>
<path d="M41 16.8L52 7M44 17H54.4M42 18.5L52 23.5M57.6 24L63 33M58.7 3L55 6M58.7 10L56 8" stroke="#2a4f80" stroke-width=".6"/>
<rect x="37.4" y="15" width="6.6" height="3.7" fill="#4a74aa" stroke="#2a4f80" stroke-width=".5"/>
<rect x="49" y="4.6" width="6" height="5" fill="#4a74aa" stroke="#2a4f80" stroke-width=".5"/>
<rect x="54.4" y="15" width="5" height="3.7" fill="#4a74aa" stroke="#2a4f80" stroke-width=".5"/>
<rect x="52" y="22" width="5.6" height="3.5" fill="#4a74aa" stroke="#2a4f80" stroke-width=".5"/>
<rect x="58.7" y="2" width="4.3" height="2.2" fill="#4a74aa"/><rect x="58.7" y="5.5" width="4.3" height="2" fill="#4a74aa"/><rect x="58.7" y="9" width="4.3" height="2.5" fill="#4a74aa"/>
<rect x="62" y="22" width="4" height="3" fill="#4a74aa"/><rect x="62" y="28" width="4" height="3" fill="#4a74aa"/><rect x="62" y="33" width="4" height="3" fill="#4a74aa"/>
</svg>
<svg class="a" style="left:56px;top:224px" width="66" height="47">
<path d="M21.8 5.3H34.8" stroke="#333" stroke-width=".9"/>
<path d="M8 26.6H60" stroke="#8a9099" stroke-width="1.2"/>
<rect x="18.2" y="26.3" width="25.8" height="17.3" fill="#6f9bcc" stroke="#4a74aa" stroke-width=".6"/>
<path d="M20 29H30M20 32H34M20 35H28" stroke="#4f76a8" stroke-width=".5"/>
<rect x="62" y="24" width="4" height="11" fill="#4a74aa"/><rect x="62" y="40" width="4" height="6" fill="#2a4f80"/>
</svg>
<svg class="a" style="left:55px;top:283px" width="66" height="46">
<path d="M27.4 1.3H34" stroke="#bbb" stroke-width=".6"/>
<ellipse cx="21.8" cy="3.6" rx="1.8" ry="1.5" fill="#4a74aa" stroke="#2a4f80" stroke-width=".5"/>
<rect x="17" y="6.3" width="4.5" height="27" fill="none" stroke="#667" stroke-width=".6"/>
<rect x="21" y="6.1" width="1.7" height="27.4" fill="#2a4f80"/>
<path d="M23 10.5L27 6.5" stroke="#666" stroke-width=".4"/>
<path d="M22.7 10.5H45M22.7 21.8H45" stroke="#556" stroke-width=".6"/>
<rect x="44.8" y="6.5" width="6.8" height="7.2" rx="1" fill="#4a74aa" stroke="#2a4f80" stroke-width=".5"/>
<rect x="44.8" y="17" width="6.8" height="6" fill="#4a74aa" stroke="#2a4f80" stroke-width=".5"/>
<ellipse cx="21.8" cy="37.9" rx="1.8" ry="1.6" fill="#557" />
</svg>
<div class="a" style="left:33px;top:347px;width:13px;height:351px;background:#f3f3f2"></div>
<div class="a" style="left:34px;top:348px;width:12px;height:11px;border-left:1px solid #b8b8b8;border-right:1px solid #b8b8b8;border-bottom:1px solid #b8b8b8;background:#eeeeed"></div>
<div class="a" style="left:35px;top:359px;width:10px;height:112px;background:#fcfcfc"></div>
<div class="a" style="left:34px;top:471px;width:12px;height:227px;border-left:1px solid #b8b8b8;border-right:1px solid #b8b8b8;background:#eeeeed"></div>
<div class="t" style="left:36px;top:383.7px;width:8px;height:8px;text-align:center;font-size:6.5px;color:#888;transform:rotate(90deg)">1</div>
<div class="a" style="left:38px;top:373.4px;width:3px;height:1px;background:#aaa"></div>
<div class="t" style="left:36px;top:412.5px;width:8px;height:8px;text-align:center;font-size:6.5px;color:#888;transform:rotate(90deg)">2</div>
<div class="a" style="left:38px;top:402.1px;width:3px;height:1px;background:#aaa"></div>
<div class="t" style="left:36px;top:441.2px;width:8px;height:8px;text-align:center;font-size:6.5px;color:#888;transform:rotate(90deg)">3</div>
<div class="a" style="left:38px;top:430.8px;width:3px;height:1px;background:#aaa"></div>
<div class="t" style="left:36px;top:469.9px;width:8px;height:8px;text-align:center;font-size:6.5px;color:#888;transform:rotate(90deg)">4</div>
<div class="a" style="left:38px;top:459.6px;width:3px;height:1px;background:#aaa"></div>
<div class="t" style="left:36px;top:498.6px;width:8px;height:8px;text-align:center;font-size:6.5px;color:#888;transform:rotate(90deg)">5</div>
<div class="a" style="left:38px;top:488.3px;width:3px;height:1px;background:#aaa"></div>
<div class="t" style="left:36px;top:527.4px;width:8px;height:8px;text-align:center;font-size:6.5px;color:#888;transform:rotate(90deg)">6</div>
<div class="a" style="left:38px;top:517.0px;width:3px;height:1px;background:#aaa"></div>
<div class="t" style="left:36px;top:556.1px;width:8px;height:8px;text-align:center;font-size:6.5px;color:#888;transform:rotate(90deg)">7</div>
<div class="a" style="left:38px;top:545.7px;width:3px;height:1px;background:#aaa"></div>
<div class="t" style="left:36px;top:584.8px;width:8px;height:8px;text-align:center;font-size:6.5px;color:#888;transform:rotate(90deg)">8</div>
<div class="a" style="left:38px;top:574.5px;width:3px;height:1px;background:#aaa"></div>
<div class="t" style="left:36px;top:613.6px;width:8px;height:8px;text-align:center;font-size:6.5px;color:#888;transform:rotate(90deg)">9</div>
<div class="a" style="left:38px;top:603.2px;width:3px;height:1px;background:#aaa"></div>
<div class="t" style="left:36px;top:642.3px;width:8px;height:8px;text-align:center;font-size:6.5px;color:#888;transform:rotate(90deg)">10</div>
<div class="a" style="left:38px;top:631.9px;width:3px;height:1px;background:#aaa"></div>
<div class="t" style="left:36px;top:671.0px;width:8px;height:8px;text-align:center;font-size:6.5px;color:#888;transform:rotate(90deg)">11</div>
<div class="a" style="left:38px;top:660.7px;width:3px;height:1px;background:#aaa"></div>
<div class="a" style="left:32px;top:698px;width:1246px;height:11px;background:#f1f1f0;border-top:1px solid #fdfdfd"></div>
<div class="a" style="left:362px;top:699px;width:579px;height:9px;background:#cbcbca"></div>
<svg class="a" style="left:35px;top:700px" width="6" height="7"><path d="M4.5 1L1.5 3.5L4.5 6" fill="none" stroke="#222" stroke-width="1.4"/></svg>
<svg class="a" style="left:1262px;top:700px" width="6" height="7"><path d="M1.5 1L4.5 3.5L1.5 6" fill="none" stroke="#222" stroke-width="1.4"/></svg>
<div class="a" style="left:32px;top:709px;width:1246px;height:9px;background:#f1f1f0"></div><div class="a" style="left:134px;top:709px;width:1144px;height:1px;background:#5e5e5e"></div>
<svg class="a" style="left:39px;top:710px" width="40" height="8"><path d="M2 1V7M6 1L3 4L6 7" fill="none" stroke="#999"/><path d="M15 1L12 4L15 7Z" fill="#999"/><path d="M22 1L25 4L22 7Z" fill="#999"/><path d="M35 1V7M31 1L34 4L31 7" fill="none" stroke="#999"/></svg>
<div class="a" style="left:86px;top:710px;width:1px;height:8px;background:#999"></div>
<div class="a" style="left:88px;top:709px;width:46px;height:9px;background:#fafafa"></div>
<div class="t" style="left:94px;top:712px;font-size:7.3px;font-weight:bold;color:#000">Разметка</div>
<div class="a" style="left:134px;top:709px;width:98px;height:10px;border:1px solid #5e5e5e;border-bottom:none;background:#f4f4f3"></div>
<div class="t" style="left:145px;top:712px;font-size:7.5px;color:#111">Элементы управлени</div>
<div class="a" style="left:231px;top:709px;width:82px;height:10px;border:1px solid #5e5e5e;border-bottom:none;background:#f4f4f3"></div>
<div class="t" style="left:242px;top:712px;font-size:7.5px;color:#111">Размерные линии</div>
<div class="a" style="left:0;top:0;width:1280px;height:720px;border:2px solid #b8121e"></div>
</body></html>
